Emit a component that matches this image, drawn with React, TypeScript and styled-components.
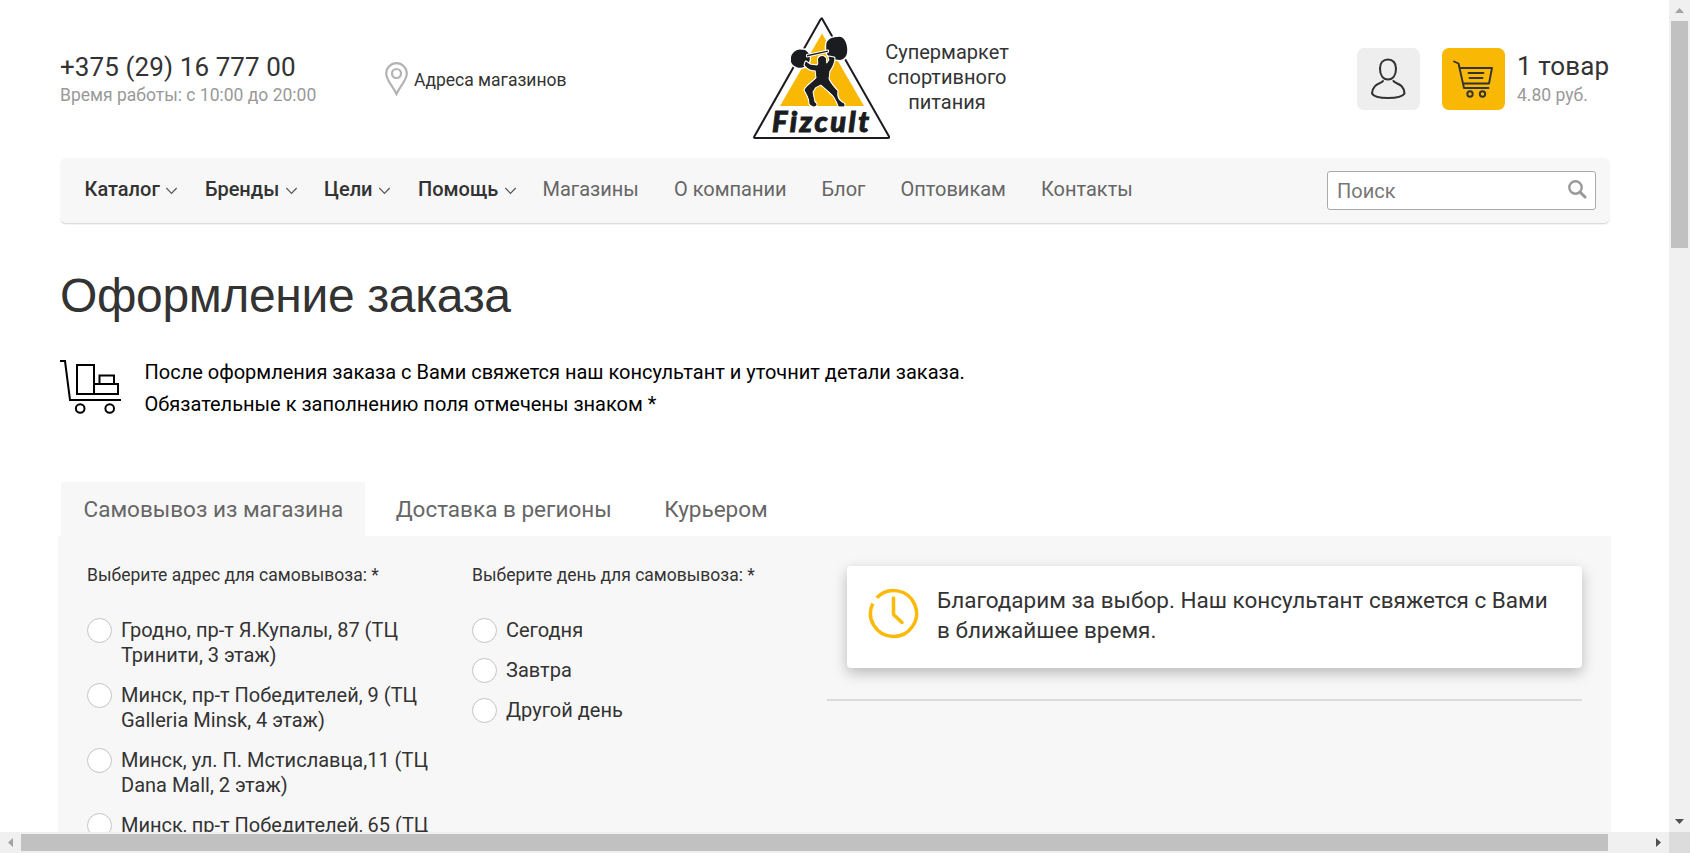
import React from 'react';
import styled, { createGlobalStyle } from 'styled-components';

const Global = createGlobalStyle`
  * { box-sizing: border-box; }
  html, body { margin: 0; padding: 0; overflow: hidden; background: #fff; }
  body { font-family: Roboto, "Liberation Sans", sans-serif; color: #333; }
`;

const Window = styled.div`
  display: grid;
  grid-template: 832px 21px / 1669px 21px;
  width: 1690px;
  height: 853px;
  overflow: hidden;
`;

const Viewport = styled.div`
  overflow: hidden;
  background: #fff;
`;

const Header = styled.header`
  display: flex;
  align-items: flex-start;
  height: 158px;
  padding: 0 59px 0 60px;
`;

const Contacts = styled.div`
  width: 325px;
  padding-top: 51px;
  white-space: nowrap;
`;

const Big = styled.div<{ $ls?: string }>`
  font-size: 26px;
  line-height: 32px;
  letter-spacing: ${(p) => p.$ls || '0'};
`;

const Small = styled.div`
  font-size: 17.5px;
  line-height: 24px;
  color: #999;
`;

const Stores = styled.a`
  display: flex;
  align-items: center;
  gap: 6px;
  width: 365px;
  padding-top: 62px;
  font-size: 17.5px;
  white-space: nowrap;
  span { padding-top: 2px; }
`;

const Brand = styled.div`
  display: flex;
  width: 607px;
`;

const Slogan = styled.div`
  width: 140px;
  padding-top: 40px;
  margin-left: -17px;
  font-size: 20px;
  line-height: 25px;
  text-align: center;
`;

const IconTile = styled.div<{ $bg: string }>`
  display: flex;
  width: 63px;
  height: 62px;
  margin: 48px 22px 0 0;
  border-radius: 7px;
  background: ${(p) => p.$bg};
`;

const CartInfo = styled.div`
  margin-left: -10px;
  padding-top: 50px;
  white-space: nowrap;
  ${Small} { padding-top: 1px; }
`;

const Nav = styled.nav`
  display: flex;
  align-items: center;
  height: 66px;
  margin: 0 59px 0 60px;
  padding: 0 14px 0 24.500px;
  border-radius: 6px;
  border-bottom: 1px solid #dcdcdc;
  box-shadow: 0 1px 0 #f3f3f3;
  background: #f7f7f7;
`;

const NavItem = styled.a<{ $w: number; $strong?: boolean }>`
  display: flex;
  align-items: center;
  gap: 6.500px;
  flex: none;
  width: ${(p) => p.$w}px;
  padding-bottom: 4px;
  font-size: 20px;
  line-height: 24px;
  font-weight: ${(p) => (p.$strong ? 500 : 400)};
  color: ${(p) => (p.$strong ? '#333' : '#666')};
  white-space: nowrap;
  svg { margin-top: 4px; }
`;

const Search = styled.div`
  display: flex;
  align-items: center;
  justify-content: space-between;
  width: 269px;
  height: 39px;
  margin-left: auto;
  padding: 1px 8px 0 9px;
  border: 1px solid #aaa;
  border-radius: 3px;
  background: #fff;
  color: #777;
  font-size: 20px;
  svg { margin-bottom: 3px; }
`;

const Title = styled.h1`
  margin: 37px 0 0 60px;
  font: 400 48px/70px "Liberation Sans", Arial, sans-serif;
  letter-spacing: -0.37px;
`;

const Note = styled.div`
  display: flex;
  align-items: flex-start;
  gap: 23.5px;
  height: 60px;
  margin: 29px 0 0 60px;
  color: #000;
  font-size: 20px;
  line-height: 32px;
  p { margin: -4px 0 0; }
`;

const Tabs = styled.div`
  display: flex;
  height: 54px;
  margin: 62px 0 0 61px;
`;

const Tab = styled.div<{ $active?: boolean }>`
  padding: 0 22px 0 22.500px;
  margin-right: 8px;
  font-size: 22.5px;
  line-height: 55px;
  color: #666;
  background: ${(p) => (p.$active ? '#f7f7f7' : 'transparent')};
`;

const Panel = styled.section`
  display: flex;
  height: 400px;
  margin: 0 58px;
  padding: 30px 29px 0;
  background: #f7f7f7;
`;

const Column = styled.div<{ $w: number }>`
  flex: none;
  width: ${(p) => p.$w}px;
`;

const FieldTitle = styled.div`
  height: 52px;
  font-size: 17.5px;
  line-height: 18px;
`;

const Option = styled.label`
  display: flex;
  gap: 9px;
  margin-bottom: 15px;
  font-size: 20px;
  line-height: 25px;
`;

const Radio = styled.span`
  flex: none;
  width: 25px;
  height: 25px;
  border: 1px solid #c4c4c4;
  border-radius: 50%;
  background: #fff;
`;

const OptionText = styled.span`
  white-space: pre-line;
`;

const Summary = styled.div`
  flex: 1;
`;

const Card = styled.div`
  display: flex;
  gap: 18px;
  height: 102px;
  margin-left: 20px;
  padding: 22px 20px 0 21px;
  border-radius: 4px;
  background: #fff;
  box-shadow: 0 5px 14px rgba(0, 0, 0, 0.25);
  font-size: 22.5px;
  line-height: 30px;
  p { margin: -3px 0 0; white-space: nowrap; }
`;

const Rule = styled.div`
  height: 2px;
  margin-top: 31px;
  background: #dbdbdb;
`;

const Bar = styled.div<{ $vertical?: boolean }>`
  display: flex;
  flex-direction: ${(p) => (p.$vertical ? 'column' : 'row')};
  align-items: center;
  background: #f0f0f0;
`;

const Arrow = styled.div`
  display: flex;
  align-items: center;
  justify-content: center;
  flex: none;
  width: 21px;
  height: 21px;
`;

const Thumb = styled.div<{ $w: number; $h: number }>`
  width: ${(p) => p.$w}px;
  height: ${(p) => p.$h}px;
  background: #c1c1c1;
`;

const Spacer = styled.div`
  flex: 1;
`;

const Corner = styled.div`
  background: #dcdcdc;
`;

const Chevron = () => (
  <svg width="12" height="8" viewBox="0 0 12 8" fill="none" stroke="#555" strokeWidth="1.2">
    <path d="M.3 1 5.500 6.500 10.700 1" />
  </svg>
);

const Pin = () => (
  <svg width="23" height="34" viewBox="0 0 23 34" fill="none" stroke="#b3b3b3" strokeWidth="2.200">
    <path d="M11.5 32C8.5 25 1.200 18.500 1.200 11.500a10.300 10.300 0 0 1 20.600 0C21.800 18.500 14.500 25 11.500 32Z" />
    <circle cx="11.500" cy="11.500" r="4.500" />
  </svg>
);

const figure =
  'M806 62 810 65 817 66C819 65 819 63 818.500 60C818 56 825 55 825.500 59C826 62 825 64 827 64L830 60 829 57 834 58C834 62 832 67 829 71L828 79C830 83 833 87 837 91C836 97 838 101 844 104V106H839C837 100 834 95 830 92L821 84 815 87 812 92 814 102C817 104 817 106 813 106L810 104C810 98 807 94 805 90C807 86 811 84 817 78L816 70C812 70 808 69 805 65Z';

const Logo = () => (
  <svg width="144" height="146" viewBox="750 0 144 146">
    <path d="M822 18.500 889 136.500Q889.500 138 888 138H755Q753.500 138 754.300 136.500L820.500 19.500Q821.500 18 822 18.500Z" fill="#fff" stroke="#1b1c20" strokeWidth="2" strokeLinejoin="round" />
    <path d="M822 33.500 864 106H780Z" fill="#f9b804" />
    <g stroke="#fff" strokeWidth="3" strokeLinejoin="round" paintOrder="stroke" fill="#1b1c20">
      <path d="M791 57C792 53 795 50 800 49.500L805 50C809 52 811 58 809 62L804 67C800 69 793 67 791 62Z" />
      <path d="M826.500 43C828 39 832 37 838 37C843 36 846 41 847 47C848 54 846 59 840 60L831 59C827 57 825.500 49 826.500 43Z" />
      <path d="M807 55 828 50.500V51.800L807 56.500Z" strokeWidth="2" />
      <path d={figure} />
      <path d={figure} stroke="#1b1c20" strokeWidth="0.800" />
    </g>
    <text x="772" y="132" textLength="97" lengthAdjust="spacing" fontFamily="Lato, sans-serif" fontWeight="900" fontStyle="italic" fontSize="29" fill="#1b1c20" stroke="#1b1c20" strokeWidth="1">Fizcult</text>
  </svg>
);

const UserIcon = () => (
  <svg width="63" height="62" viewBox="0 0 63 62" fill="none" stroke="#333" strokeWidth="2.100" strokeLinecap="round">
    <path d="M31 11.500C26 11.500 23 15 23 20.500C23 27 26 31.500 31 31.500S39 27 39 20.500C39 15 36 11.500 31 11.500Z" />
    <path d="M26 33C24 36 16 35 15 45.500C18 51.500 44 51.500 47.500 45.500C47 35 38 36 36.500 33" />
  </svg>
);

const CartIcon = () => (
  <svg width="63" height="62" viewBox="0 0 63 62" fill="none" stroke="#333" strokeWidth="1.900" strokeLinecap="round" strokeLinejoin="round">
    <path d="M12 13.500 16.500 15.500 22 40H46.500M18 20H50L47 35.500H21M26.500 25H41.500M27.500 30H40.500" />
    <circle cx="28" cy="46" r="2.700" />
    <circle cx="40.500" cy="46" r="2.700" />
  </svg>
);

const SearchIcon = () => (
  <svg width="19" height="19" viewBox="0 0 19 19" fill="none" stroke="#999">
    <circle cx="7.500" cy="7.500" r="6.200" strokeWidth="2.400" />
    <path d="M12 12 17 17" strokeWidth="3" strokeLinecap="round" />
  </svg>
);

const Trolley = () => (
  <svg width="61" height="54" viewBox="0 0 61 54" fill="none" stroke="#000" strokeWidth="2">
    <path d="M0 1H5L10 40H61M17 5H34V34H17ZM34 24H58V34H34M39.500 24V15.500H54V24" />
    <circle cx="20.200" cy="48.500" r="4.300" />
    <circle cx="49.700" cy="48.500" r="4.300" />
  </svg>
);

const Clock = () => (
  <svg width="51" height="51" viewBox="0 0 51 51" fill="none" stroke="#fbb90a" strokeWidth="3.500">
    <path d="M8.800 9.700A23 23 0 1 1 4.800 15.500" />
    <path d="M25.500 10V26.500L34 34.500" strokeLinecap="round" />
  </svg>
);

const Triangle = ({ d, fill }: { d: string; fill: string }) => (
  <svg width="9" height="9" viewBox="0 0 9 9" fill={fill}>
    <path d={d} />
  </svg>
);

const menu: { text: string; w: number; strong?: boolean }[] = [
  { text: 'Каталог', w: 120.5, strong: true },
  { text: 'Бренды', w: 119, strong: true },
  { text: 'Цели', w: 94, strong: true },
  { text: 'Помощь', w: 124.5, strong: true },
  { text: 'Магазины', w: 131.5 },
  { text: 'О компании', w: 147.5 },
  { text: 'Блог', w: 79 },
  { text: 'Оптовикам', w: 140.5 },
  { text: 'Контакты', w: 100 },
];

const shops = [
  'Гродно, пр-т Я.Купалы, 87 (ТЦ\nТринити, 3 этаж)',
  'Минск, пр-т Победителей, 9 (ТЦ\nGalleria Minsk, 4 этаж)',
  'Минск, ул. П. Мстиславца,11 (ТЦ\nDana Mall, 2 этаж)',
  'Минск, пр-т Победителей, 65 (ТЦ',
];

const days = ['Сегодня', 'Завтра', 'Другой день'];

export default function App() {
  return (
    <Window>
      <Global />
      <Viewport>
        <Header>
          <Contacts>
            <Big $ls="0.1px">+375 (29) 16 777 00</Big>
            <Small>Время работы: с 10:00 до 20:00</Small>
          </Contacts>
          <Stores><Pin /><span>Адреса магазинов</span></Stores>
          <Brand>
            <Logo />
            <Slogan>Супермаркет спортивного питания</Slogan>
          </Brand>
          <IconTile $bg="#eee"><UserIcon /></IconTile>
          <IconTile $bg="#f9b804"><CartIcon /></IconTile>
          <CartInfo>
            <Big $ls="0.1px">1 товар</Big>
            <Small>4.80 руб.</Small>
          </CartInfo>
        </Header>
        <Nav>
          {menu.map((m) => (
            <NavItem key={m.text} $w={m.w} $strong={m.strong}>
              {m.text}
              {m.strong && <Chevron />}
            </NavItem>
          ))}
          <Search>Поиск<SearchIcon /></Search>
        </Nav>
        <Title>Оформление заказа</Title>
        <Note>
          <Trolley />
          <p>
            После оформления заказа с Вами свяжется наш консультант и уточнит детали заказа.
            <br />
            Обязательные к заполнению поля отмечены знаком *
          </p>
        </Note>
        <Tabs>
          <Tab $active>Самовывоз из магазина</Tab>
          <Tab>Доставка в регионы</Tab>
          <Tab>Курьером</Tab>
        </Tabs>
        <Panel>
          <Column $w={385}>
            <FieldTitle>Выберите адрес для самовывоза: *</FieldTitle>
            {shops.map((s) => (
              <Option key={s}><Radio /><OptionText>{s}</OptionText></Option>
            ))}
          </Column>
          <Column $w={355}>
            <FieldTitle>Выберите день для самовывоза: *</FieldTitle>
            {days.map((d) => (
              <Option key={d}><Radio /><OptionText>{d}</OptionText></Option>
            ))}
          </Column>
          <Summary>
            <Card>
              <Clock />
              <p>Благодарим за выбор. Наш консультант свяжется с Вами<br />в ближайшее время.</p>
            </Card>
            <Rule />
          </Summary>
        </Panel>
      </Viewport>
      <Bar $vertical>
        <Arrow><Triangle d="M0 7 4.500 2 9 7Z" fill="#a3a3a3" /></Arrow>
        <Thumb $w={17} $h={227} />
        <Spacer />
        <Arrow><Triangle d="M0 2 4.500 7 9 2Z" fill="#505050" /></Arrow>
      </Bar>
      <Bar>
        <Arrow><Triangle d="M7 0 2 4.500 7 9Z" fill="#a3a3a3" /></Arrow>
        <Thumb $w={1587} $h={17} />
        <Spacer />
        <Arrow><Triangle d="M2 0 7 4.500 2 9Z" fill="#505050" /></Arrow>
      </Bar>
      <Corner />
    </Window>
  );
}
